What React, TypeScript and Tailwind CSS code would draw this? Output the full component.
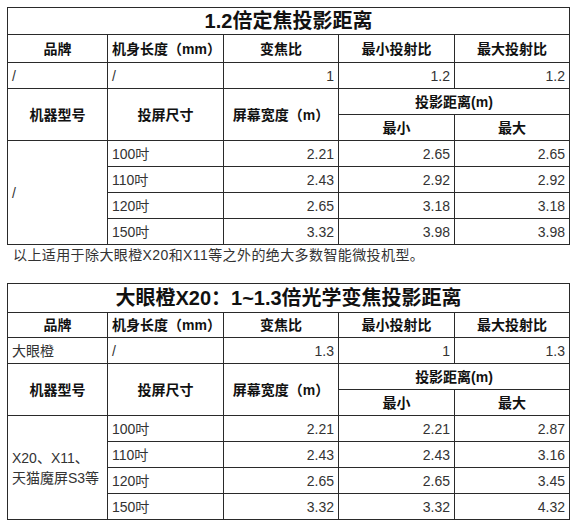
import React from "react";

type DistRow = { size: string; width: string; min: string; max: string };

type TableData = {
	title: string;
	brand: string;
	length: string;
	zoom: string;
	minRatio: string;
	maxRatio: string;
	model: React.ReactNode;
	rows: DistRow[];
	titleH: string;
	headH: string;
};

const tables: TableData[] = [
	{
		title: "1.2倍定焦投影距离",
		brand: "/",
		length: "/",
		zoom: "1",
		minRatio: "1.2",
		maxRatio: "1.2",
		model: "/",
		rows: [
			{ size: "100吋", width: "2.21", min: "2.65", max: "2.65" },
			{ size: "110吋", width: "2.43", min: "2.92", max: "2.92" },
			{ size: "120吋", width: "2.65", min: "3.18", max: "3.18" },
			{ size: "150吋", width: "3.32", min: "3.98", max: "3.98" },
		],
		titleH: "h-[27px]",
		headH: "h-[28px]",
	},
	{
		title: "大眼橙X20：1~1.3倍光学变焦投影距离",
		brand: "大眼橙",
		length: "/",
		zoom: "1.3",
		minRatio: "1",
		maxRatio: "1.3",
		model: (
			<>
				X20、X11、
				<br />
				天猫魔屏S3等
			</>
		),
		rows: [
			{ size: "100吋", width: "2.21", min: "2.21", max: "2.87" },
			{ size: "110吋", width: "2.43", min: "2.43", max: "3.16" },
			{ size: "120吋", width: "2.65", min: "2.65", max: "3.45" },
			{ size: "150吋", width: "3.32", min: "3.32", max: "4.32" },
		],
		titleH: "h-[29px]",
		headH: "h-[25px]",
	},
];

const cell = "border border-[#2a2a2a] px-[4px] py-0 align-middle";
const head = `${cell} text-center font-bold text-[#111]`;
const num = `${cell} text-right text-[#333]`;
const txt = `${cell} text-left text-[#333]`;

function DistanceTable({ t }: Readonly<{ t: TableData }>) {
	return (
		<table className="w-[562px] table-fixed border-collapse text-[14px] leading-[20px]">
			<colgroup>
				<col className="w-[100px]" />
				<col className="w-[116px]" />
				<col className="w-[115px]" />
				<col className="w-[116px]" />
				<col className="w-[115px]" />
			</colgroup>
			<tbody>
				<tr className={t.titleH}>
					<td colSpan={5} className={`${cell} text-center text-[20px] font-bold text-[#111]`}>
						{t.title}
					</td>
				</tr>
				<tr className={t.headH}>
					<td className={head}>品牌</td>
					<td className={head}>机身长度（mm）</td>
					<td className={head}>变焦比</td>
					<td className={head}>最小投射比</td>
					<td className={head}>最大投射比</td>
				</tr>
				<tr className="h-[26px]">
					<td className={txt}>{t.brand}</td>
					<td className={txt}>{t.length}</td>
					<td className={num}>{t.zoom}</td>
					<td className={num}>{t.minRatio}</td>
					<td className={num}>{t.maxRatio}</td>
				</tr>
				<tr className="h-[26px]">
					<td rowSpan={2} className={head}>
						机器型号
					</td>
					<td rowSpan={2} className={head}>
						投屏尺寸
					</td>
					<td rowSpan={2} className={head}>
						屏幕宽度（m）
					</td>
					<td colSpan={2} className={head}>
						投影距离(m)
					</td>
				</tr>
				<tr className="h-[26px]">
					<td className={head}>最小</td>
					<td className={head}>最大</td>
				</tr>
				{t.rows.map((r, i) => (
					<tr key={r.size} className="h-[26px]">
						{i === 0 && (
							<td rowSpan={4} className={txt}>
								{t.model}
							</td>
						)}
						<td className={txt}>{r.size}</td>
						<td className={num}>{r.width}</td>
						<td className={num}>{r.min}</td>
						<td className={num}>{r.max}</td>
					</tr>
				))}
			</tbody>
		</table>
	);
}

export default function App() {
	return (
		<div
			className="h-[526px] w-[580px] bg-white pl-[7px] pt-[7px]"
			style={{ fontFamily: '"Liberation Sans", "Noto Sans CJK SC", sans-serif' }}
		>
			<DistanceTable t={tables[0]} />
			<p className="mt-0 mb-[18px] pl-[6px] text-[14px] leading-[20px] tracking-[0.4px] text-[#333]">
				以上适用于除大眼橙X20和X11等之外的绝大多数智能微投机型。
			</p>
			<DistanceTable t={tables[1]} />
		</div>
	);
}
